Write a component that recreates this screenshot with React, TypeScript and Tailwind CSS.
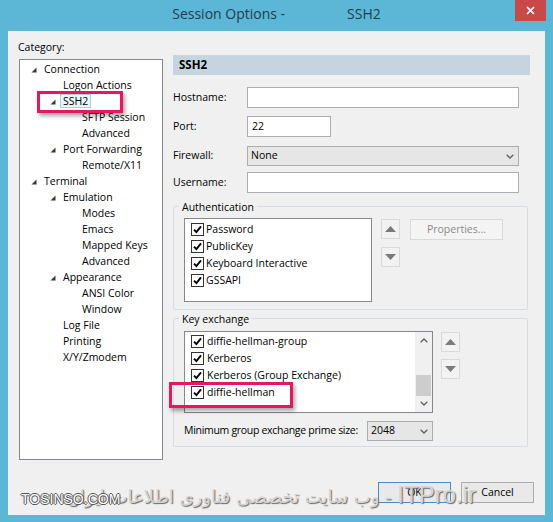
import React from "react";

type Node = { level: 0 | 1 | 2; label: string; arrow?: boolean; selected?: boolean };

const tree: Node[] = [
  { level: 0, label: "Connection", arrow: true },
  { level: 1, label: "Logon Actions" },
  { level: 1, label: "SSH2", arrow: true, selected: true },
  { level: 2, label: "SFTP Session" },
  { level: 2, label: "Advanced" },
  { level: 1, label: "Port Forwarding", arrow: true },
  { level: 2, label: "Remote/X11" },
  { level: 0, label: "Terminal", arrow: true },
  { level: 1, label: "Emulation", arrow: true },
  { level: 2, label: "Modes" },
  { level: 2, label: "Emacs" },
  { level: 2, label: "Mapped Keys" },
  { level: 2, label: "Advanced" },
  { level: 1, label: "Appearance", arrow: true },
  { level: 2, label: "ANSI Color" },
  { level: 2, label: "Window" },
  { level: 1, label: "Log File" },
  { level: 1, label: "Printing" },
  { level: 1, label: "X/Y/Zmodem" },
];

const indent = ["pl-[10px]", "pl-[29px]", "pl-[48px]"];

function TreeArrow() {
  return (
    <svg width="6" height="6" viewBox="0 0 6 6" className="mt-[2px]">
      <polygon points="5.5,0.5 5.5,5.5 0.5,5.5" fill="#3a3a3a" />
    </svg>
  );
}

function Check() {
  return (
    <span className="w-[13px] h-[13px] border border-[#333] bg-white flex items-center justify-center shrink-0">
      <svg width="9" height="9" viewBox="0 0 9 9">
        <path d="M1 4.6 L3.4 7.1 L8 1.4" stroke="#000" strokeWidth="1.9" fill="none" />
      </svg>
    </span>
  );
}

function Chevron({ up = false }: { up?: boolean }) {
  return (
    <svg width="8" height="5" viewBox="0 0 8 5">
      <path d={up ? "M0.7 4.3 L4 1 L7.3 4.3" : "M0.7 0.7 L4 4 L7.3 0.7"} stroke="#606060" strokeWidth="1.3" fill="none" />
    </svg>
  );
}

function Tri({ up = false }: { up?: boolean }) {
  return (
    <svg width="11" height="6" viewBox="0 0 11 6">
      <polygon points={up ? "0,6 11,6 5.5,0" : "0,0 11,0 5.5,6"} fill="#7a7a7a" />
    </svg>
  );
}

function MoveBtn({ up = false }: { up?: boolean }) {
  return (
    <div className="w-[19px] h-[20px] border border-[#d9d9d9] bg-[#f2f2f2] flex items-center justify-center">
      <Tri up={up} />
    </div>
  );
}

export default function App() {
  return (
    <div className="relative w-[553px] h-[522px] bg-[#5cb6d6] flex flex-col font-['Open_Sans',sans-serif] text-[10.5px] text-black overflow-hidden">
      {/* Title bar */}
      <div className="h-[31px] flex items-start shrink-0">
        <div className="w-[38px]" />
        <div className="flex-1 flex justify-center pt-[4px] text-[14px] leading-[20px] text-[#1f3d4f]">
          <span>Session Options -</span>
          <span className="ml-[62px]">SSH2</span>
        </div>
        <div className="w-[31px] h-[21px] mr-[7px] bg-[#c9494b] flex items-center justify-center">
          <svg width="9" height="9" viewBox="0 0 9 9">
            <path d="M1 1 L8 8 M8 1 L1 8" stroke="#fff" strokeWidth="1.7" />
          </svg>
        </div>
      </div>

      {/* Client area */}
      <div className="mx-[8px] h-[484px] bg-[#f0f0f0] flex flex-col pt-[8px] px-[11px]">
        <div className="flex items-start">
          {/* Left column */}
          <div className="w-[144px] flex flex-col">
            <div className="h-[16px] leading-[16px] -ml-[1px]">Category:</div>
            <div className="mt-[4px] h-[401px] border border-[#828790] bg-white pt-[1px]">
              {tree.map((n, i) => (
                <div key={i} className={`flex items-center h-[16px] leading-[16px] ${indent[n.level]}`}>
                  <span className="w-[14px] flex items-center pl-[1px]">{n.arrow && <TreeArrow />}</span>
                  {n.selected ? (
                    <span className="-ml-[3px] px-[2px] h-[14px] leading-[12px] border border-[#a9cdeb] bg-[#eaf4fc]">{n.label}</span>
                  ) : (
                    <span>{n.label}</span>
                  )}
                </div>
              ))}
            </div>
          </div>

          {/* Right column */}
          <div className="ml-[10px] mt-[16px] w-[357px] flex flex-col">
            <div className="h-[20px] bg-[#c5d4df] pl-[6px] flex items-center font-bold text-[11.5px]">SSH2</div>

            <div className="mt-[12px] h-[21px] flex items-center">
              <div className="w-[74px]">Hostname:</div>
              <div className="w-[272px] h-[21px] border border-[#abadb3] bg-white" />
            </div>
            <div className="mt-[8px] h-[21px] flex items-center">
              <div className="w-[74px]">Port:</div>
              <div className="w-[84px] h-[21px] border border-[#abadb3] bg-white pl-[4px] leading-[18px]">22</div>
            </div>
            <div className="mt-[9px] h-[20px] flex items-center">
              <div className="w-[74px]">Firewall:</div>
              <div className="w-[272px] h-[20px] border border-[#acacac] bg-[#e6e6e6] pl-[3px] pr-[4px] flex items-center justify-between">
                <span>None</span>
                <Chevron />
              </div>
            </div>
            <div className="mt-[6px] h-[21px] flex items-center">
              <div className="w-[74px]">Username:</div>
              <div className="w-[272px] h-[21px] border border-[#abadb3] bg-white" />
            </div>

            {/* Authentication */}
            <div className="mt-[13px] w-[355px] h-[104px] border border-[#d5dde2] rounded-[2px] flex flex-col">
              <div className="-mt-[7px] ml-[5px] px-[3px] w-fit bg-[#f0f0f0] leading-[14px]">Authentication</div>
              <div className="mt-[4px] pl-[10px] flex items-start">
                <div className="w-[188px] h-[84px] border border-[#828790] bg-white pt-[2px] pl-[6px]">
                  {["Password", "PublicKey", "Keyboard Interactive", "GSSAPI"].map((t) => (
                    <div key={t} className="h-[17px] flex items-center gap-[2px]">
                      <Check />
                      <span>{t}</span>
                    </div>
                  ))}
                </div>
                <div className="ml-[9px] mt-[1px] flex flex-col gap-[8px]">
                  <MoveBtn up />
                  <MoveBtn />
                </div>
                <div className="ml-[10px] mt-[1px] w-[93px] h-[21px] border border-[#d9d9d9] bg-[#f4f4f4] text-[#8a8a8a] flex items-center justify-center">
                  Properties...
                </div>
              </div>
            </div>

            {/* Key exchange */}
            <div className="mt-[8px] w-[355px] h-[129px] border border-[#d5dde2] rounded-[2px] flex flex-col">
              <div className="-mt-[7px] ml-[5px] px-[3px] w-fit bg-[#f0f0f0] leading-[14px]">Key exchange</div>
              <div className="mt-[5px] pl-[10px] flex items-start">
                <div className="w-[249px] h-[82px] border border-[#828790] bg-white flex">
                  <div className="flex-1 pt-[1px] pl-[6px]">
                    {["diffie-hellman-group", "Kerberos", "Kerberos (Group Exchange)", "diffie-hellman"].map((t) => (
                      <div key={t} className="h-[17px] flex items-center gap-[3px]">
                        <Check />
                        <span>{t}</span>
                      </div>
                    ))}
                  </div>
                  <div className="w-[17px] bg-[#f0f0f0] flex flex-col items-center">
                    <div className="h-[17px] flex items-center justify-center"><Chevron up /></div>
                    <div className="flex-1 w-full px-[1px] pt-[26px]">
                      <div className="h-[21px] bg-[#cdcdcd]" />
                    </div>
                    <div className="h-[17px] flex items-center justify-center"><Chevron /></div>
                  </div>
                </div>
                <div className="ml-[8px] mt-[1px] flex flex-col gap-[7px]">
                  <MoveBtn up />
                  <MoveBtn />
                </div>
              </div>
              <div className="mt-[8px] ml-[10px] w-[249px] h-[20px] flex items-center justify-between">
                <span className="whitespace-nowrap tracking-[-0.3px]">Minimum group exchange prime size:</span>
                <div className="shrink-0 w-[66px] h-[20px] border border-[#acacac] bg-[#e6e6e6] pl-[3px] pr-[4px] flex items-center justify-between">
                  <span>2048</span>
                  <Chevron />
                </div>
              </div>
            </div>
          </div>
        </div>

        {/* Buttons */}
        <div className="mt-[22px] flex justify-end gap-[10px]">
          <div className="w-[73px] h-[21px] border border-[#3c8fd6] bg-[#e9e9e9] flex items-center justify-center">OK</div>
          <div className="w-[73px] h-[21px] border border-[#acacac] bg-[#e9e9e9] flex items-center justify-center">Cancel</div>
        </div>
      </div>

      <div className="h-[7px]" />

      {/* Annotation rectangles */}
      <div className="absolute left-[37px] top-[91px] w-[86px] h-[22px] border-[3px] border-[#e2195d] shadow-[2px_3px_4px_rgba(0,0,0,0.35)]" />
      <div className="absolute left-[169px] top-[382px] w-[124px] h-[26px] border-[3px] border-[#e2195d] shadow-[2px_3px_4px_rgba(0,0,0,0.35)]" />

      {/* Watermark */}
      <div
        dir="rtl"
        className="absolute right-[77px] top-[481px] whitespace-nowrap font-['DejaVu_Sans',sans-serif] text-[#d4d4d4] [text-shadow:1px_1px_1px_#666] leading-[28px]"
      >
        <span className="font-['Liberation_Sans',sans-serif] text-[24px]">ITPro.ir</span>
        <span className="text-[18px]"> - وب سایت تخصصی فناوری اطلاعات ایران</span>
      </div>
      <div className="absolute left-[21px] top-[491px] font-['Liberation_Sans',sans-serif] text-[14px] leading-[16px] text-white [text-shadow:-1px_0_#555,1px_0_#555,0_-1px_#555,0_1px_#555]">
        TOSINSO.COM
      </div>
    </div>
  );
}
